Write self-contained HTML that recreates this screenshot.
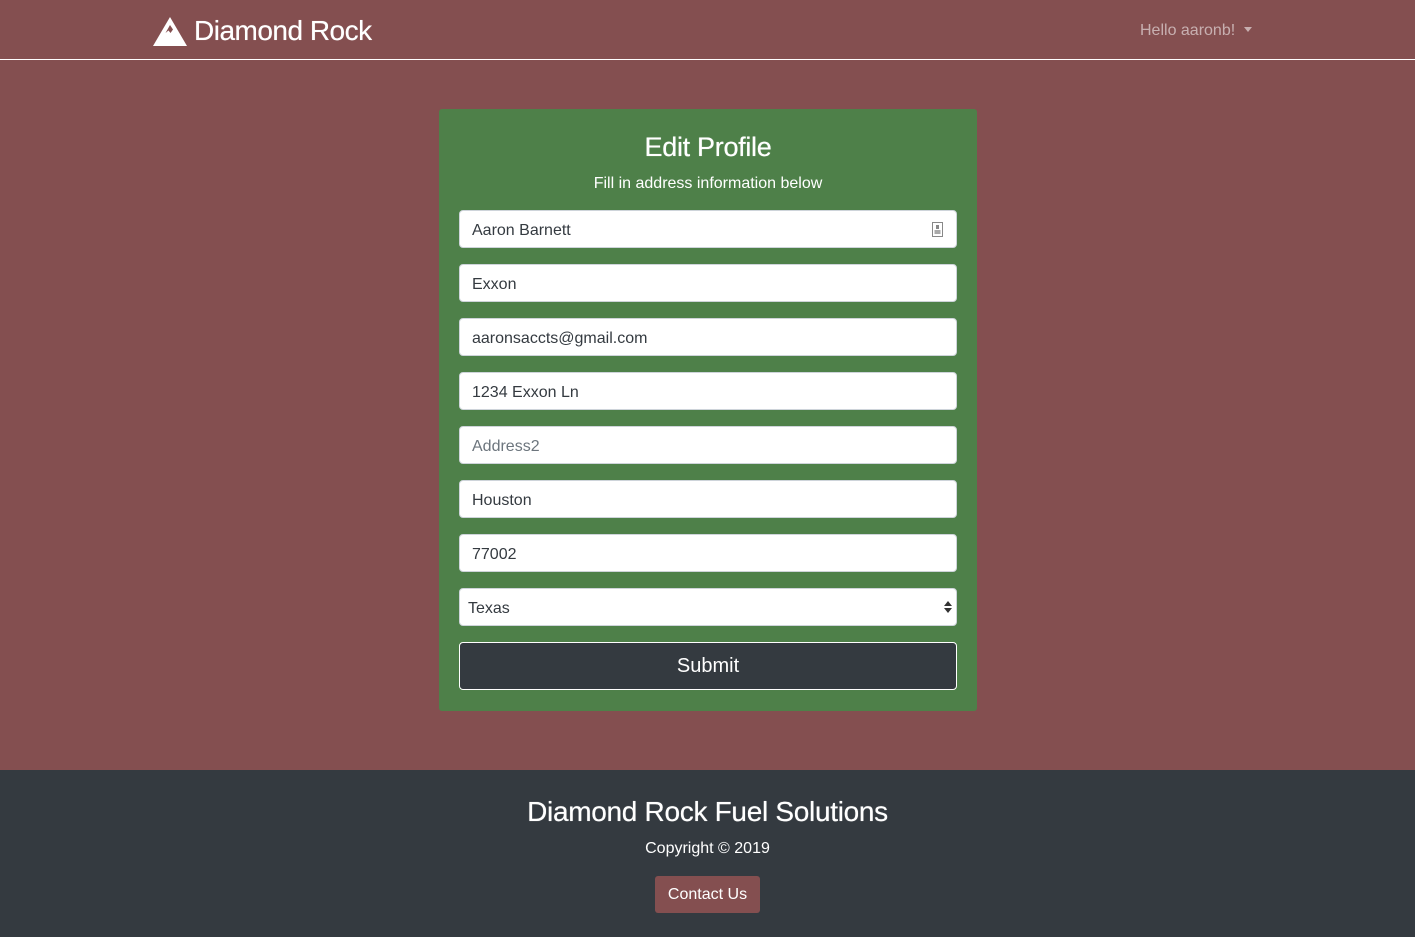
<!DOCTYPE html>
<html><head><style>
*{box-sizing:border-box;margin:0;padding:0}
body{width:1415px;height:937px;background:#844f50;font-family:"Liberation Sans",sans-serif;position:relative;overflow:hidden}
.nav{height:60px;border-bottom:1px solid #fff;position:relative}
.brand{position:absolute;left:152px;top:15px;color:#fff;font-size:28px;display:flex;align-items:center;letter-spacing:-0.5px;text-shadow:0 0 .5px #fff}
.brand svg{margin-right:6px}
.hello{position:absolute;left:1140px;top:22px;color:rgba(255,255,255,.55);font-size:16px}
.caret{display:inline-block;margin-left:9px;vertical-align:3px;border-top:5px solid rgba(255,255,255,.55);border-left:4px solid transparent;border-right:4px solid transparent}
.card{position:absolute;left:439px;top:109px;width:538px;height:602px;background:#4e8049;border-radius:3px}
h1{color:#fff;font-size:27px;font-weight:normal;text-align:center;margin-top:23px;letter-spacing:-0.3px;text-shadow:0 0 .6px #fff}
.sub{color:#fff;font-size:16px;text-align:center;margin-top:12px}
.in{position:absolute;left:20px;width:498px;height:38px;background:#fff;border-radius:4px;border:1px solid #ced4da;font-size:16px;color:#343a40;padding:11px 12px 0;line-height:18px}
.ph{color:#6c757d}
.btn{position:absolute;left:20px;top:533px;width:498px;height:48px;background:#343a40;border:1px solid #fff;border-radius:4px;color:#fff;font-size:20px;text-align:center;line-height:47px}
.foot{position:absolute;left:0;top:770px;width:1415px;height:167px;background:#343a40;text-align:center;color:#fff}
.foot h2{font-weight:normal;font-size:28px;margin-top:26px;letter-spacing:-0.3px;text-shadow:0 0 .6px #fff}
.foot p{font-size:16px;margin-top:12px}
.contact{display:inline-block;margin-top:18px;background:#844f50;color:#fff;font-size:16px;padding:10px 13px 9px;border-radius:3px}
</style></head><body>
<div class="nav">
<div class="brand"><svg width="36" height="30" viewBox="0 0 36 30"><path d="M18 1 L35 30 L1 30 Z" fill="#fff"/><path d="M18 9 L13.5 17 L16.5 14.5 L18.5 17 L21 13.5 Z" fill="#844f50"/></svg>Diamond Rock</div>
<div class="hello">Hello aaronb!<span class="caret"></span></div>
</div>
<div class="card">
<h1>Edit Profile</h1>
<div class="sub">Fill in address information below</div>
<div class="in" style="top:101px">Aaron Barnett<svg style="position:absolute;right:13px;top:11px" width="11" height="15" viewBox="0 0 11 15"><rect x="0.5" y="0.5" width="10" height="14" fill="none" stroke="#888"/><rect x="4" y="3" width="3" height="4" fill="#888"/><rect x="2.5" y="8" width="6" height="4" fill="#aaa"/></svg></div>
<div class="in" style="top:155px">Exxon</div>
<div class="in" style="top:209px">aaronsaccts@gmail.com</div>
<div class="in" style="top:263px">1234 Exxon Ln</div>
<div class="in ph" style="top:317px">Address2</div>
<div class="in" style="top:371px">Houston</div>
<div class="in" style="top:425px">77002</div>
<div class="in" style="top:479px;padding-left:8px">Texas<svg style="position:absolute;right:4px;top:11px" width="8" height="14" viewBox="0 0 8 14"><path d="M0 6 L4 1 L8 6Z M0 8 L4 13 L8 8Z" fill="#333"/></svg></div>
<div class="btn">Submit</div>
</div>
<div class="foot">
<h2>Diamond Rock Fuel Solutions</h2>
<p>Copyright © 2019</p>
<div class="contact">Contact Us</div>
</div>
</body></html>
